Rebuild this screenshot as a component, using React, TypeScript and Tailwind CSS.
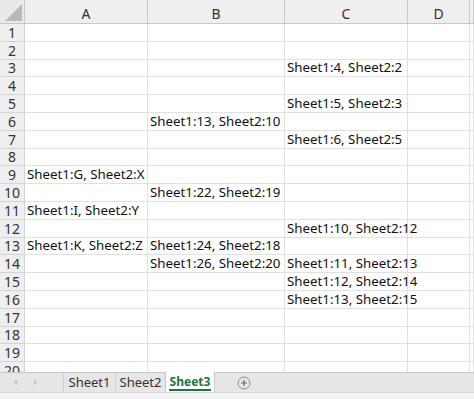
const cols = ["A", "B", "C", "D", ""];

const data: Record<number, Record<string, string>> = {
  3: { C: "Sheet1:4, Sheet2:2" },
  5: { C: "Sheet1:5, Sheet2:3" },
  6: { B: "Sheet1:13, Sheet2:10" },
  7: { C: "Sheet1:6, Sheet2:5" },
  9: { A: "Sheet1:G, Sheet2:X" },
  10: { B: "Sheet1:22, Sheet2:19" },
  11: { A: "Sheet1:I, Sheet2:Y" },
  12: { C: "Sheet1:10, Sheet2:12" },
  13: { A: "Sheet1:K, Sheet2:Z", B: "Sheet1:24, Sheet2:18" },
  14: { B: "Sheet1:26, Sheet2:20", C: "Sheet1:11, Sheet2:13" },
  15: { C: "Sheet1:12, Sheet2:14" },
  16: { C: "Sheet1:13, Sheet2:15" },
};

const rows = Array.from({ length: 20 }, (_, i) => i + 1);

export default function App() {
  return (
    <div
      className="w-[474px] h-[399px] flex flex-col bg-white text-[#222] overflow-hidden"
      style={{ fontFamily: '"Noto Sans", "Open Sans", sans-serif' }}
    >
      {/* grid */}
      <div className="h-[372px] overflow-hidden">
        <div className="grid grid-cols-[25px_123px_137px_123px_62px_1fr]">
          {/* header row */}
          <div className="h-[24px] bg-[#e9e9e9] border-r border-b border-[#c8c8c8] relative">
            <div className="absolute right-[2px] bottom-[2px] w-0 h-0 border-l-[17px] border-l-transparent border-b-[17px] border-b-[#b8b8b8]" />
          </div>
          {cols.map((c, i) => (
            <div
              key={i}
              className="h-[24px] bg-[#efefef] border-r border-b border-[#c8c8c8] flex items-center justify-center pt-[3px] text-[14px] text-[#333]"
            >
              {c}
            </div>
          ))}

          {rows.map((r) => (
            <Row key={r} r={r} />
          ))}
        </div>
      </div>

      {/* sheet tabs */}
      <div className="h-[20px] bg-[#e6e6e6] border-t border-[#c8c8c8] flex items-stretch text-[13px] text-[#333]">
        <div className="w-[63px] flex items-center gap-[15px] pl-[13px]">
          <svg width="5" height="7" viewBox="0 0 5 7">
            <path d="M4 0.5L1 3.5L4 6.5Z" fill="#c4c4c4" />
          </svg>
          <svg width="5" height="7" viewBox="0 0 5 7">
            <path d="M1 0.5L4 3.5L1 6.5Z" fill="#c4c4c4" />
          </svg>
        </div>
        <div className="w-[52px] border-l border-[#cfcfcf] flex items-center justify-center leading-none">
          Sheet1
        </div>
        <div className="w-[50px] border-l border-[#cfcfcf] flex items-center justify-center leading-none">
          Sheet2
        </div>
        <div className="w-[50px] bg-white border-x border-[#c8c8c8] -mt-px flex items-center justify-center font-bold text-[12px] text-[#217346] leading-none relative">
          Sheet3
          <div className="absolute left-[3px] right-[3px] bottom-[1px] h-[2px] bg-[#217346]" />
        </div>
        <div className="w-[58px] flex items-center justify-center">
          <svg width="14" height="14" viewBox="0 0 14 14">
            <circle cx="7" cy="7" r="6" fill="none" stroke="#8a8a8a" strokeWidth="1" />
            <path d="M7 4v6M4 7h6" stroke="#6a6a6a" strokeWidth="1.2" />
          </svg>
        </div>
      </div>
      <div className="flex-1 bg-[#f3f3f3] border-t border-[#d8d8d8]" />
    </div>
  );
}

function Row({ r }: { r: number }) {
  const d = data[r] || {};
  return (
    <>
      <div className="h-[17.8px] bg-[#efefef] border-r border-b border-[#d4d4d4] flex items-end justify-center text-[14px] leading-[17px] text-[#333]">
        {r}
      </div>
      {cols.map((c, i) => (
        <div
          key={i}
          className="h-[17.8px] border-r border-b border-[#e1e1e1] flex items-end pl-[2px] text-[13.3px] leading-[17px] whitespace-nowrap overflow-visible text-[#111]"
        >
          {c && d[c]}
        </div>
      ))}
    </>
  );
}
